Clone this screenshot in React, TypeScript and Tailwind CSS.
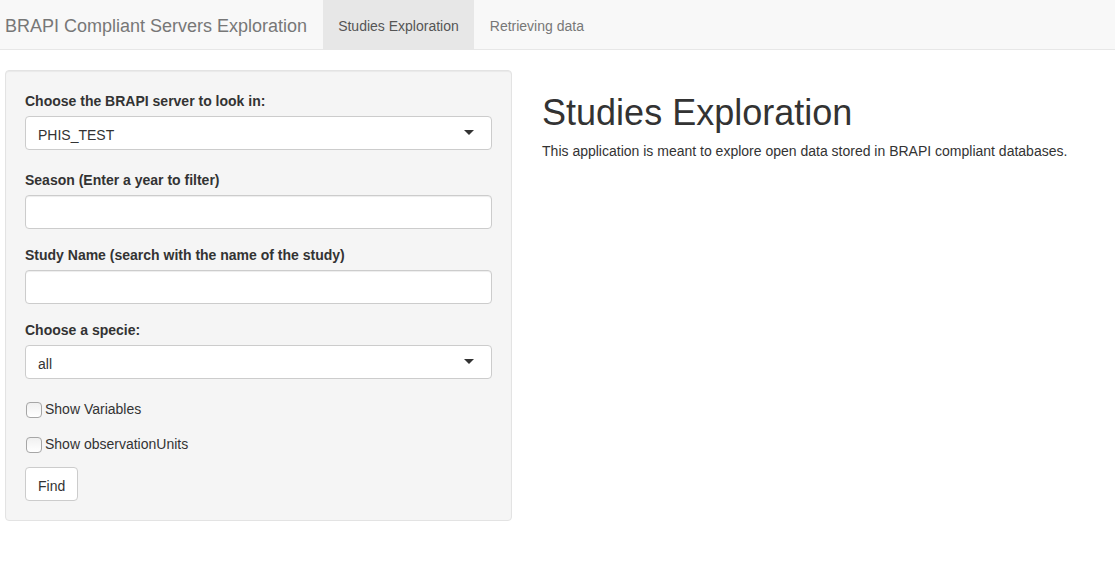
import { useState } from "react";
import type { ReactNode } from "react";

const control =
  "block h-[34px] w-full rounded border border-[#cccccc] bg-white px-3 text-sm text-[#333333] outline-none focus:border-[#66afe9]";

const textControl = `${control} shadow-[inset_0_1px_1px_rgba(0,0,0,0.075)]`;

function Field({ id, label, children }: { id: string; label: string; children: ReactNode }) {
  return (
    <div>
      <label htmlFor={id} className="mb-[5px] block text-sm leading-5 font-bold">
        {label}
      </label>
      {children}
    </div>
  );
}

function Select({ id, options }: { id: string; options: string[] }) {
  return (
    <div className="relative">
      <select id={id} className={`${control} appearance-none pt-[3px]`}>
        {options.map((option) => (
          <option key={option}>{option}</option>
        ))}
      </select>
      <svg
        viewBox="0 0 10 5"
        aria-hidden="true"
        className="pointer-events-none absolute top-[14px] right-[18px] h-[5px] w-[10px] fill-[#333333]"
      >
        <path d="M0 0h10L5 5z" />
      </svg>
    </div>
  );
}

function Check({ label }: { label: string }) {
  const [checked, setChecked] = useState(false);
  return (
    <label className="flex items-center gap-[3px] text-sm leading-5">
      <input
        type="checkbox"
        checked={checked}
        onChange={(e) => setChecked(e.target.checked)}
        className="mt-[2px] ml-px size-4 appearance-none rounded border border-[#a6a6a6] bg-linear-to-b from-[#f0f0f0] to-white checked:from-[#337ab7] checked:to-[#337ab7]"
      />
      {label}
    </label>
  );
}

export default function App() {
  return (
    <div className="font-['Liberation_Sans',Arial,sans-serif] text-sm leading-5 text-[#333333]">
      <nav className="mb-5 flex h-[50px] border-b border-[#e7e7e7] bg-[#f8f8f8] text-[#777777]">
        <a href="#home" className="pt-4 pr-4 pl-[5px] text-lg leading-5">
          BRAPI Compliant Servers Exploration
        </a>
        <a href="#studies" aria-current="page" className="bg-[#e7e7e7] px-[15px] pt-4 text-[#555555]">
          Studies Exploration
        </a>
        <a href="#data" className="px-4 pt-4">
          Retrieving data
        </a>
      </nav>
      <div className="grid grid-cols-[25fr_28fr] items-start gap-[30px] px-[5px]">
        <form
          onSubmit={(e) => e.preventDefault()}
          className="rounded border border-[#e3e3e3] bg-[#f5f5f5] p-[19px] pt-5 shadow-[inset_0_1px_1px_rgba(0,0,0,0.05)]"
        >
          <div className="mb-5">
            <Field id="server" label="Choose the BRAPI server to look in:">
              <Select id="server" options={["PHIS_TEST"]} />
            </Field>
          </div>
          <div className="mb-5 flex flex-col gap-4">
            <Field id="season" label="Season (Enter a year to filter)">
              <input id="season" type="text" className={textControl} />
            </Field>
            <Field id="study" label="Study Name (search with the name of the study)">
              <input id="study" type="text" className={textControl} />
            </Field>
            <Field id="specie" label="Choose a specie:">
              <Select id="specie" options={["all"]} />
            </Field>
          </div>
          <div className="mb-[13px] flex flex-col gap-[15px]">
            <Check label="Show Variables" />
            <Check label="Show observationUnits" />
          </div>
          <button
            type="submit"
            className="block h-[34px] rounded border border-[#cccccc] bg-white px-3 pt-[3px] text-sm"
          >
            Find
          </button>
        </form>
        <main className="pt-[23px]">
          <h1 className="mb-2 text-4xl leading-10">Studies Exploration</h1>
          <p>This application is meant to explore open data stored in BRAPI compliant databases.</p>
        </main>
      </div>
    </div>
  );
}
